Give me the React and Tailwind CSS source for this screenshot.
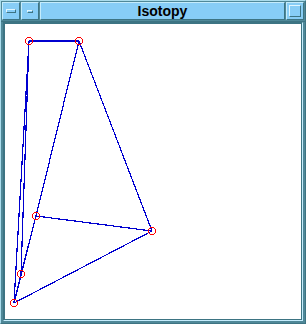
import React from 'react';

const pts = [
  [28, 40],
  [78, 40],
  [151, 230],
  [35, 215],
  [20, 273],
  [13, 302],
];

const edges = [
  [0, 1],
  [1, 2],
  [2, 3],
  [2, 5],
  [1, 3],
  [3, 4],
  [3, 5],
  [0, 4],
  [0, 5],
  [4, 5],
];

function TitleButton({ children, className = '' }) {
  return (
    <div
      className={`flex items-center justify-center bg-[#87cdf6] border-t border-l border-[#c4ecfc] border-r border-b border-r-[#3d7483] border-b-[#3d7483] ${className}`}
    >
      {children}
    </div>
  );
}

export default function App() {
  return (
    <div className="w-[306px] h-[324px] flex flex-col bg-[#4f8898] border border-[#a9dcec] border-r-[#3d7483] border-b-[#3d7483]">
      <div className="flex h-[21px] gap-[1px] px-[1px] pt-[1px] pb-[1px] border-b border-[#3d7483]">
        <TitleButton className="w-[18px]">
          <div className="w-[10px] h-[4px] bg-[#87cdf6] border-t border-l border-[#e0f6ff] border-r border-b border-r-[#3d7483] border-b-[#3d7483]" />
        </TitleButton>
        <TitleButton className="w-[18px]">
          <div className="w-[6px] h-[3px] bg-[#87cdf6] border-t border-l border-[#e0f6ff] border-r border-b border-r-[#3d7483] border-b-[#3d7483]" />
        </TitleButton>
        <TitleButton className="flex-1">
          <span className="text-[14px] leading-none font-bold text-black" style={{ fontFamily: '"Liberation Sans", Arial, sans-serif' }}>
            Isotopy
          </span>
        </TitleButton>
        <TitleButton className="w-[18px]">
          <div className="w-[12px] h-[12px] bg-[#87cdf6] border-t border-l border-[#e0f6ff] border-r border-b border-r-[#3d7483] border-b-[#3d7483]" />
        </TitleButton>
      </div>
      <div className="flex-1 flex mx-[2px] mb-[2px] border border-[#3d7483] border-r-[#c4ecfc] border-b-[#c4ecfc]">
        <div className="flex-1 bg-white border border-[#3d7483]">
          <svg className="block w-full h-full" viewBox="4 23 296 295" preserveAspectRatio="none" shapeRendering="crispEdges">
            {edges.map(([a, b], i) => (
              <line
                key={i}
                x1={pts[a][0]}
                y1={pts[a][1]}
                x2={pts[b][0]}
                y2={pts[b][1]}
                stroke="#0000d0"
                strokeWidth="1.2"
              />
            ))}
            {pts.map(([x, y], i) => (
              <circle key={i} cx={x} cy={y} r="3.5" fill="none" stroke="#ff0000" strokeWidth="1" />
            ))}
          </svg>
        </div>
      </div>
    </div>
  );
}
